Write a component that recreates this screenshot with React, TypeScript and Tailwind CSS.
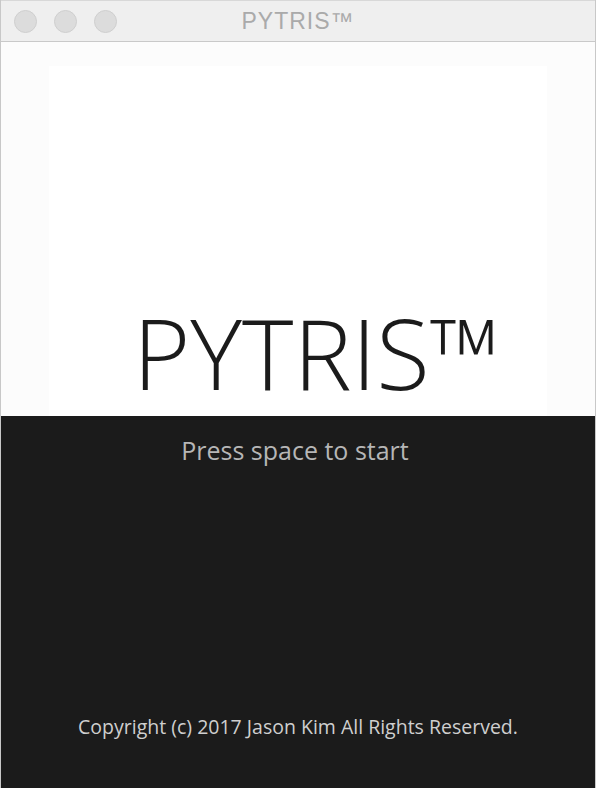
import React from "react";

const TrafficLight = () => (
  <span className="block w-[23px] h-[23px] rounded-full bg-[#dcdcdc] border border-[#cfcfcf]" />
);

const App = () => {
  return (
    <div className="w-[596px] h-[788px] flex flex-col overflow-hidden border-x border-[#c8c8c8] bg-[#1b1b1b]">
      {/* title bar */}
      <div className="relative h-[42px] shrink-0 flex items-center bg-[#efefef] border-b border-[#c9c9c9] border-t border-t-[#d8d8d8]">
        <div className="flex gap-[17px] pl-[13px]">
          <TrafficLight />
          <TrafficLight />
          <TrafficLight />
        </div>
        <span className="absolute inset-x-0 text-center text-[23px] tracking-[1px] text-[#aaaaaa] font-['Liberation_Sans',Arial,sans-serif]">
          PYTRIS™
        </span>
      </div>

      {/* splash */}
      <div className="h-[374px] shrink-0 bg-[#fcfcfc] flex flex-col pt-[24px] px-[48px]">
        <div className="flex-1 bg-white flex items-end pl-[84px] pb-[15px]">
          <h1 className="text-[98px] leading-none font-light text-[#1b1b1b] font-['Open_Sans',sans-serif]">
            PYTRIS™
          </h1>
        </div>
      </div>

      {/* dark panel */}
      <div className="flex-1 flex flex-col items-center justify-between pt-[16px] pb-[47px] font-['Open_Sans',sans-serif]">
        <p className="text-[25px] text-[#b6b6b6] pr-[6px]">Press space to start</p>
        <p className="text-[19.5px] text-[#cfcfcf]">
          Copyright (c) 2017 Jason Kim All Rights Reserved.
        </p>
      </div>
    </div>
  );
};

export default App;
